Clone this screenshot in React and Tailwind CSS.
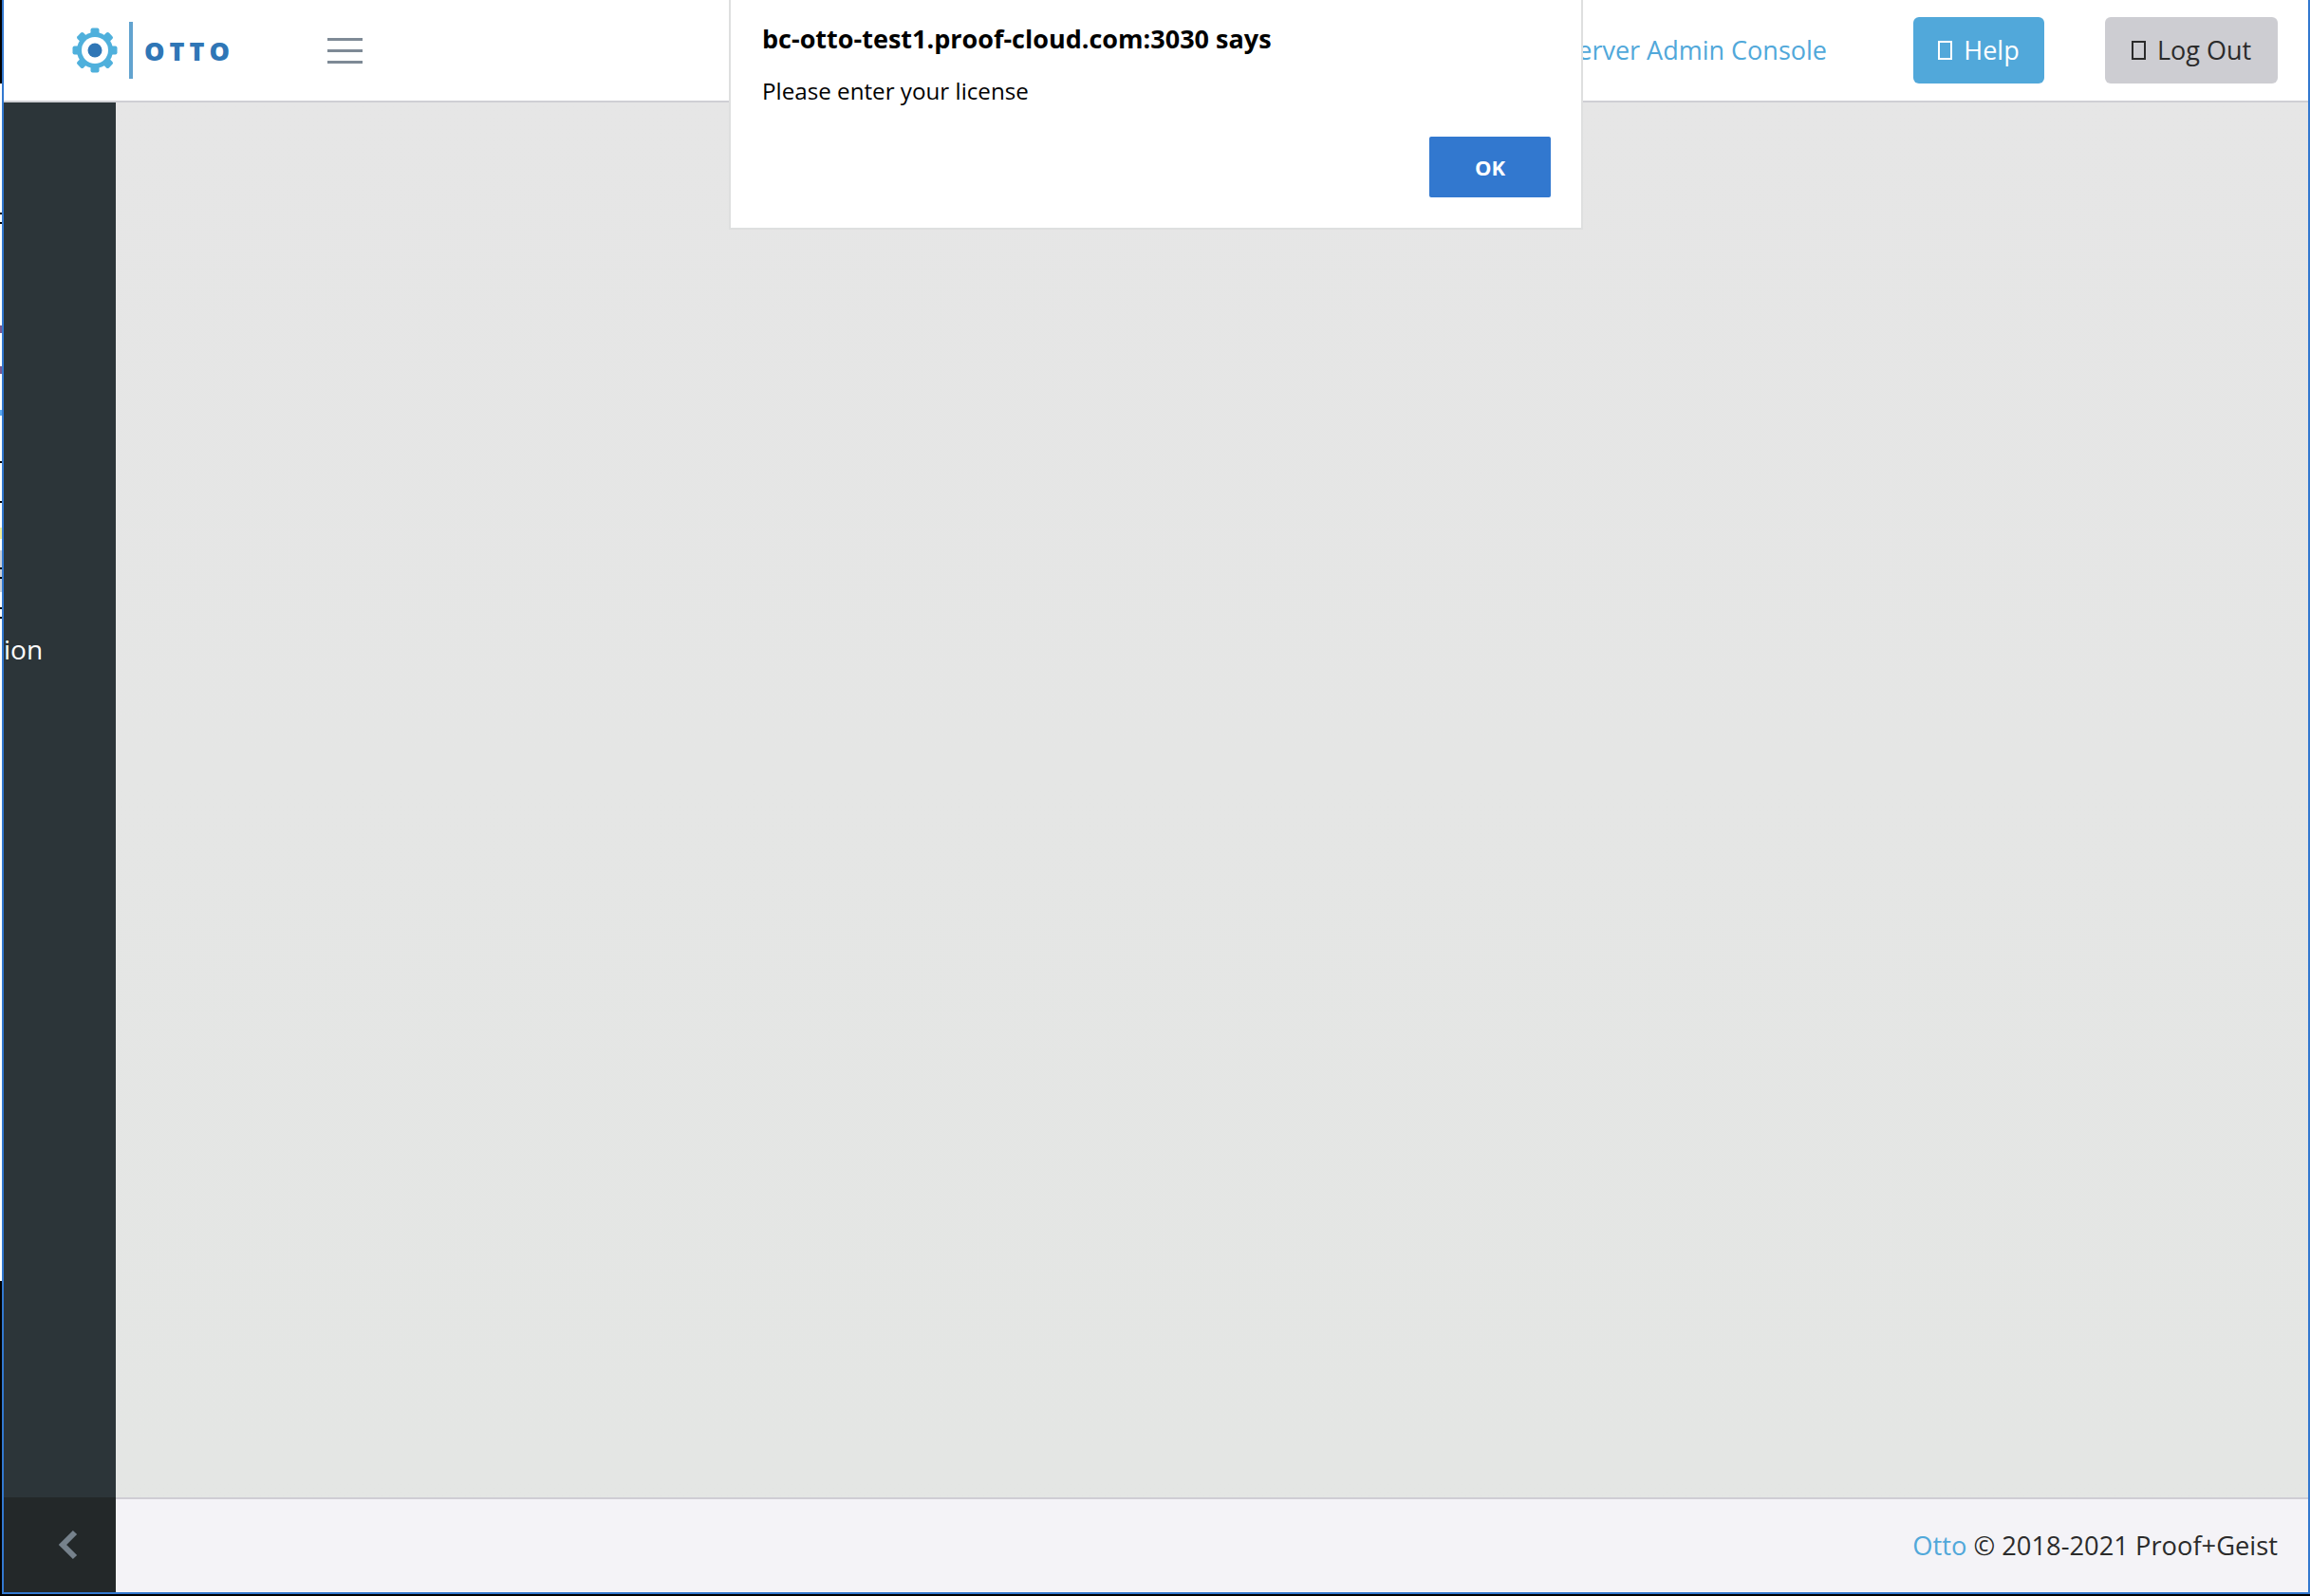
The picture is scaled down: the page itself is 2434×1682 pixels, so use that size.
const sans = "font-['Open_Sans','Noto_Sans',sans-serif]";

function Gear() {
  const teeth = [0, 45, 90, 135, 180, 225, 270, 315];
  return (
    <svg width="48" height="48" viewBox="0 0 48 48" className="shrink-0">
      {teeth.map((a) => (
        <rect key={a} x="19.5" y="0.5" width="9" height="9" rx="2" fill="#4fb0dc" transform={`rotate(${a} 24 24)`} />
      ))}
      <circle cx="24" cy="24" r="19" fill="#4fb0dc" />
      <circle cx="24" cy="24" r="14" fill="#ffffff" />
      <circle cx="24" cy="24" r="7.5" fill="#2f76b6" />
    </svg>
  );
}

function Tofu() {
  return <span className="inline-block w-[15px] h-[20px] border-2 border-current" />;
}

export default function App() {
  return (
    <div className={`w-[2434px] h-[1682px] bg-black flex flex-col overflow-hidden ${sans}`}>
      <div className="flex h-[1680px]">
        {/* sliver of the window behind */}
        <div className="relative w-[2px] h-full bg-white">
          <div className="absolute left-0 top-0 w-[2px] h-[88px] bg-black" />
          <div className="absolute left-0 top-[224px] w-[2px] h-[2px] bg-black" />
          <div className="absolute left-0 top-[234px] w-[2px] h-[2px] bg-black" />
          <div className="absolute left-0 top-[343px] w-[2px] h-[8px] bg-[#7a5a90]" />
          <div className="absolute left-0 top-[386px] w-[2px] h-[8px] bg-[#7a5a90]" />
          <div className="absolute left-0 top-[432px] w-[2px] h-[6px] bg-[#5aa8f0]" />
          <div className="absolute left-0 top-[486px] w-[2px] h-[2px] bg-black" />
          <div className="absolute left-0 top-[528px] w-[2px] h-[2px] bg-black" />
          <div className="absolute left-0 top-[556px] w-[2px] h-[12px] bg-[#f5ee9a]" />
          <div className="absolute left-0 top-[580px] w-[2px] h-[44px] bg-[#ccd0d8]" />
          <div className="absolute left-0 top-[598px] w-[2px] h-[2px] bg-black" />
          <div className="absolute left-0 top-[608px] w-[2px] h-[2px] bg-black" />
          <div className="absolute left-0 top-[640px] w-[2px] h-[2px] bg-black" />
          <div className="absolute left-0 top-[650px] w-[2px] h-[2px] bg-black" />
          <div className="absolute left-0 top-[1350px] bottom-0 w-[2px] bg-black" />
        </div>

        <div className="relative flex-1 flex flex-col border-l-2 border-r-2 border-b-2 border-[#3278cf] bg-white">
          {/* header */}
          <header className="h-[106px] box-content border-b-2 border-[#cfcfd4] bg-white flex items-center shrink-0">
            <div className="flex items-center ml-[72px]">
              <Gear />
              <div className="ml-[12px] w-[4px] h-[60px] bg-[#62a3cf]" />
              <span className="ml-[12px] w-[90px] whitespace-nowrap text-[27px] leading-none font-extrabold tracking-[5px] text-[#2f76b6]">OTTO</span>
            </div>
            <div className="ml-[103px] w-[37px] flex flex-col gap-[9px] mt-[1px]">
              <div className="h-[3px] bg-[#7e8a96]" />
              <div className="h-[3px] bg-[#7e8a96]" />
              <div className="h-[3px] bg-[#7e8a96]" />
            </div>
            <span className="ml-auto text-[27px] text-[#51a8da]">Server Admin Console</span>
            <button className="ml-[91px] w-[138px] h-[70px] rounded-[6px] bg-[#51a8da] text-white text-[27px] flex items-center justify-center gap-[12px]">
              <Tofu />
              <span>Help</span>
            </button>
            <button className="ml-[64px] mr-[32px] w-[182px] h-[70px] rounded-[6px] bg-[#cdcdd2] text-[#2b2b2b] text-[27px] flex items-center justify-center gap-[12px]">
              <Tofu />
              <span>Log Out</span>
            </button>
          </header>

          {/* body */}
          <div className="flex flex-1 min-h-0">
            <aside className="w-[118px] flex flex-col shrink-0 bg-[#2c3539]">
              <div className="flex-1 pt-[559px] text-[28px] leading-[34px] text-white">ion</div>
              <div className="h-[100px] bg-[#232829] flex items-center justify-center pl-[18px]">
                <svg width="22" height="32" viewBox="0 0 22 32" fill="none">
                  <path d="M18 3 L5 16 L18 29" stroke="#76828c" strokeWidth="6" />
                </svg>
              </div>
            </aside>
            <div className="flex-1 flex flex-col">
              <main className="flex-1 bg-gradient-to-b from-[#e6e6e6] to-[#e4e6e4] border-b-2 border-[#cfcdd4]" />
              <footer className="h-[98px] shrink-0 bg-[#f4f3f7] flex items-center justify-end pr-[32px] text-[27.3px] text-[#2b2b2b]">
                <span className="text-[#51a8da]">Otto</span>
                <span>&nbsp;© 2018-2021 Proof+Geist</span>
              </footer>
            </div>
          </div>

          {/* browser alert */}
          <div className="absolute left-[764px] top-0 w-[900px] h-[242px] bg-white border-x-2 border-b-2 border-[#dedfdf] flex flex-col pl-[33px] pr-[32px] text-black">
            <div className="mt-[24px] text-[27px] leading-[34px] font-bold whitespace-nowrap">bc-otto-test1.proof-cloud.com:3030 says</div>
            <div className="mt-[23px] text-[24.2px] leading-[30px]">Please enter your license</div>
            <div className="flex justify-end mt-[33px]">
              <button className="w-[128px] h-[64px] rounded-[2px] bg-[#3278cf] text-white text-[22px] font-bold">OK</button>
            </div>
          </div>
        </div>
      </div>
      <div className="h-[2px] bg-black" />
    </div>
  );
}
